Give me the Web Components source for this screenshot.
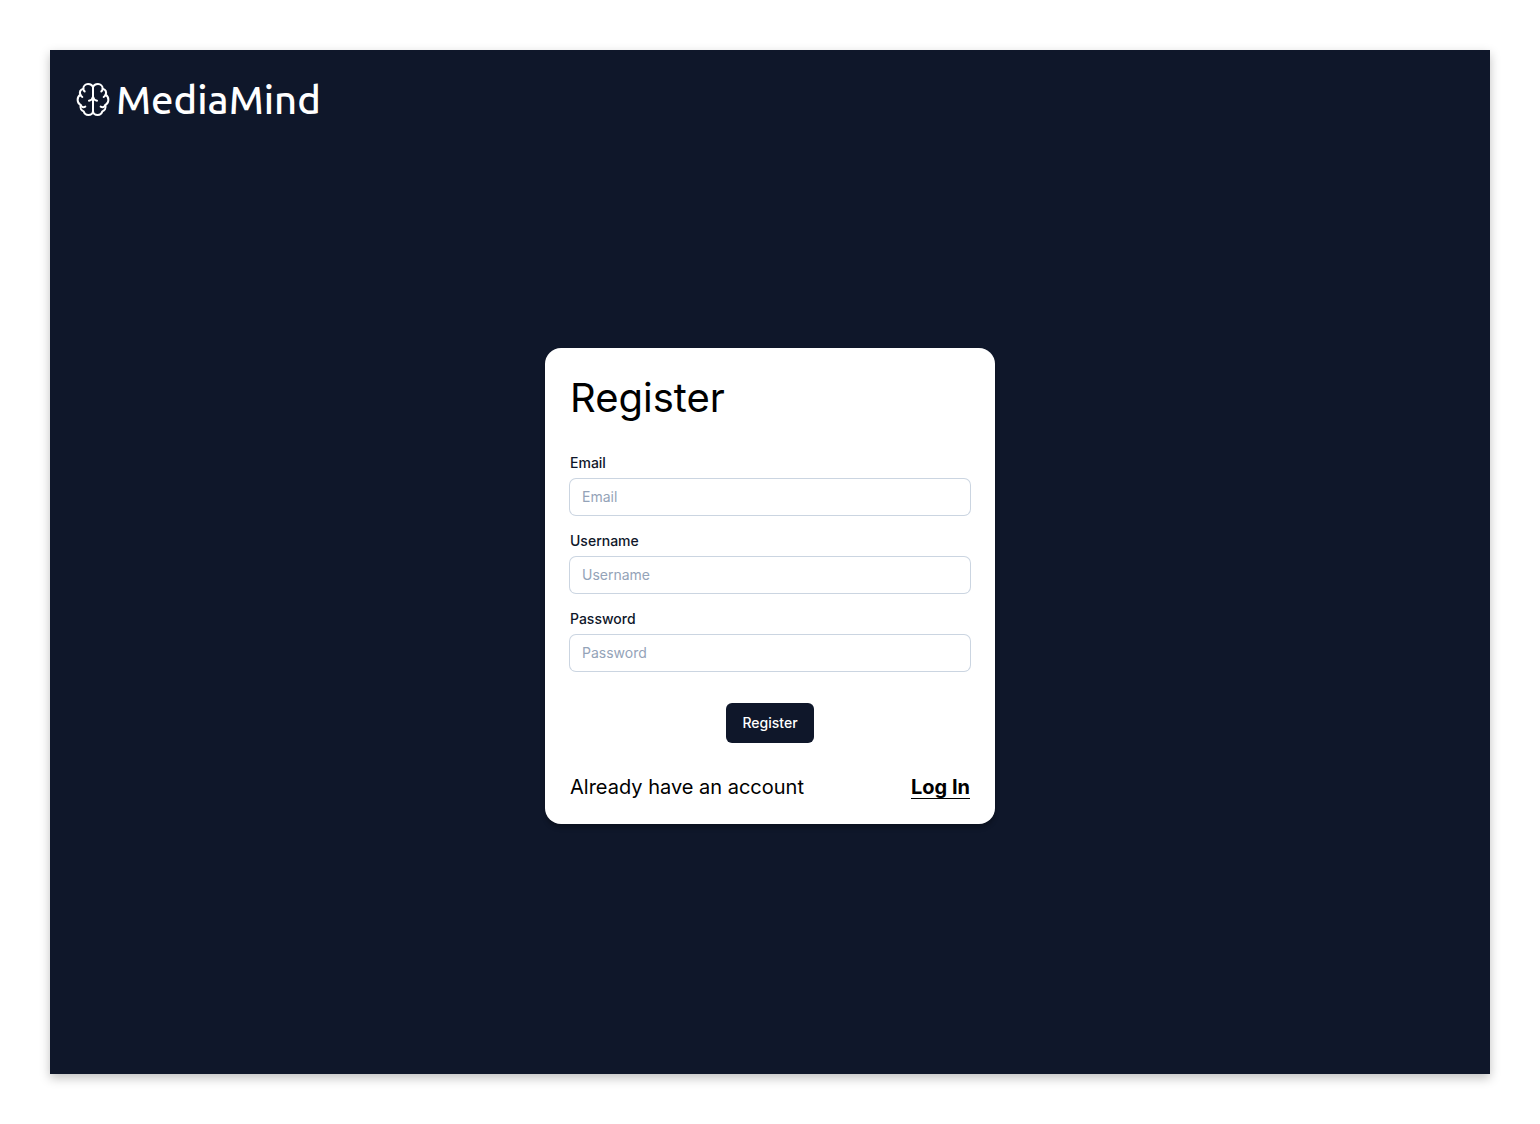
<!DOCTYPE html>
<html lang="en">
<head>
<meta charset="utf-8">
<title>MediaMind – Register</title>
<style>
  * { box-sizing: border-box; }
  body { margin: 0; background: #fff; font-family: Inter, "Liberation Sans", sans-serif; }
</style>
</head>
<body>
<mm-page>
  <mm-logo slot="header">MediaMind</mm-logo>
  <mm-register-card></mm-register-card>
</mm-page>
<script>
class MmElement extends HTMLElement {
  constructor() {
    super();
    this.attachShadow({ mode: "open" }).innerHTML =
      "<style>*{box-sizing:border-box}</style>" + this.render();
  }
}

class MmLogo extends MmElement {
  render() {
    return `
<style>
  :host { display: flex; align-items: center; gap: 3px; color: #fff;
    font: 470 40px/50px Ubuntu, "Open Sans", "Noto Sans", sans-serif; }
  svg { width: 40px; height: 40px; flex: none; }
</style>
<svg viewBox="0 2 120 120" fill="none" stroke="currentColor" stroke-width="6" stroke-linecap="round" stroke-linejoin="round" aria-hidden="true">
  <defs>
    <g id="half">
      <path d="M60 24C58 17 52 14 45 14C37 14 31 20 31 28C23 31 19 38 22 46C11 54 11 70 23 77C20 87 26 94 32 96C34 104 40 107 46 107C54 107 60 102 60 95"/>
      <path d="M31 28C31 31 32 34 35 36"/>
      <path d="M22 46C23 49 25 51 28 53"/>
      <path d="M23 77C25 83 31 85 37 82"/>
      <path d="M60 52C59 59 54 63 48 64"/>
    </g>
  </defs>
  <use href="#half"/>
  <use href="#half" transform="matrix(-1 0 0 1 120 0)"/>
  <path d="M60 24V95"/>
</svg>
<span><slot></slot></span>`;
  }
}
customElements.define("mm-logo", MmLogo);

class MmField extends HTMLElement {
  connectedCallback() {
    if (this.shadowRoot) return;
    const label = this.getAttribute("label");
    const type = this.getAttribute("type") || "text";
    this.attachShadow({ mode: "open" }).innerHTML = `
<style>
  * { box-sizing: border-box; }
  :host { display: flex; flex-direction: column; gap: 6px; }
  label { font: 500 14px/20px Inter, sans-serif; color: #0f172a; }
  input { width: 100%; height: 36px; margin: 0; padding: 0 12px 2px; border: 0; border-radius: 6px;
    background: #fff; box-shadow: 0 0 0 1px #cbd5e1; color: #0f172a; font: 400 14px/20px Inter, sans-serif; }
  input::placeholder { color: #94a3b8; opacity: 1; }
  input:focus { outline: 2px solid #94a3b8; outline-offset: 2px; }
</style>
<label for="control">${label}</label>
<input id="control" type="${type}" placeholder="${label}">`;
  }
}
customElements.define("mm-field", MmField);

class MmButton extends MmElement {
  render() {
    return `
<style>
  :host { display: inline-flex; }
  button { border: 0; margin: 0; border-radius: 6px; padding: 10px 16px; background: #0f172a; color: #fff;
    font: 500 14px/20px Inter, sans-serif; cursor: pointer; }
</style>
<button type="button"><slot></slot></button>`;
  }
}
customElements.define("mm-button", MmButton);

class MmRegisterCard extends MmElement {
  render() {
    return `
<style>
  :host { display: block; width: 100%; max-width: 450px; padding: 25px; border-radius: 16px;
    background: #fff; color: #000; box-shadow: 0 4px 4px rgba(0,0,0,.25); }
  form, .fields { display: flex; flex-direction: column; }
  .fields { gap: 16px; margin: 30px 0 32px; }
  h1 { margin: 0; font: 400 40px/50px Inter, sans-serif; }
  mm-button { align-self: center; }
  footer { display: flex; justify-content: space-between; margin-top: 32px; font: 400 20px/24px Inter, sans-serif; }
  a { color: inherit; font-weight: 700; text-decoration: underline; text-decoration-thickness: 1px; text-underline-offset: 4px; }
</style>
<form>
  <h1>Register</h1>
  <div class="fields">
    <mm-field label="Email" type="email"></mm-field>
    <mm-field label="Username"></mm-field>
    <mm-field label="Password" type="password"></mm-field>
  </div>
  <mm-button>Register</mm-button>
  <footer><span>Already have an account</span><a href="#login">Log In</a></footer>
</form>`;
  }
}
customElements.define("mm-register-card", MmRegisterCard);

class MmPage extends MmElement {
  render() {
    return `
<style>
  :host { display: block; padding: 50px; }
  .stage { display: flex; flex-direction: column; min-height: calc(100vh - 100px);
    background: #0f172a; box-shadow: 0 4px 10px rgba(0,0,0,.25); }
  header { display: flex; padding: 25px 23px; }
  main { flex: 1; display: flex; align-items: center; justify-content: center; padding: 0 24px 52px; }
</style>
<div class="stage">
  <header><slot name="header"></slot></header>
  <main><slot></slot></main>
</div>`;
  }
}
customElements.define("mm-page", MmPage);
</script>
</body>
</html>
